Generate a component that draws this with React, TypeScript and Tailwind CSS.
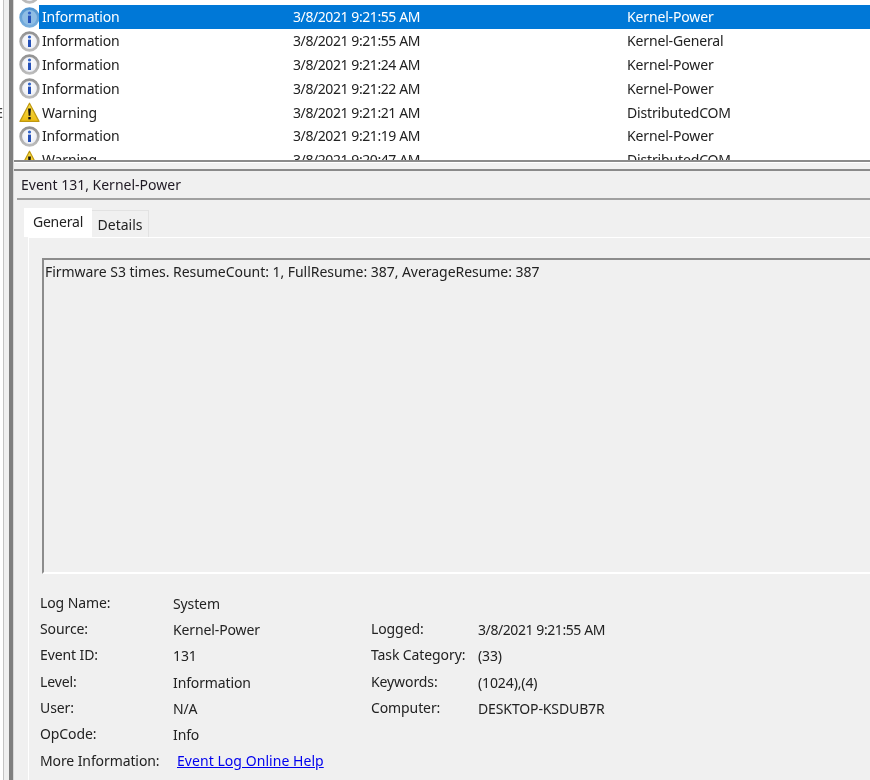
import React from "react";

// Event Viewer: event list on top, event properties below

const FONT = "[font-family:'Noto_Sans','Open_Sans',sans-serif]";

type Level = "Information" | "Warning";

interface EventRow {
  level: Level;
  date: string;
  source: string;
  selected?: boolean;
}

const rows: EventRow[] = [
  { level: "Information", date: "3/8/2021 9:21:56 AM", source: "Kernel-Power" },
  { level: "Information", date: "3/8/2021 9:21:55 AM", source: "Kernel-Power", selected: true },
  { level: "Information", date: "3/8/2021 9:21:55 AM", source: "Kernel-General" },
  { level: "Information", date: "3/8/2021 9:21:24 AM", source: "Kernel-Power" },
  { level: "Information", date: "3/8/2021 9:21:22 AM", source: "Kernel-Power" },
  { level: "Warning", date: "3/8/2021 9:21:21 AM", source: "DistributedCOM" },
  { level: "Information", date: "3/8/2021 9:21:19 AM", source: "Kernel-Power" },
  { level: "Warning", date: "3/8/2021 9:20:47 AM", source: "DistributedCOM" },
];

function InfoIcon({ selected }: { selected?: boolean }) {
  return (
    <svg width="21" height="21" viewBox="0 0 21 21" className="shrink-0">
      <defs>
        <linearGradient id="rim" x1="0" y1="0" x2="0" y2="1">
          <stop offset="0" stopColor="#939393" />
          <stop offset="1" stopColor="#bcbcbc" />
        </linearGradient>
        <radialGradient id="face" cx="0.5" cy="0.45" r="0.6">
          <stop offset="0" stopColor="#ffffff" />
          <stop offset="1" stopColor="#e6e9f2" />
        </radialGradient>
        <linearGradient id="rimSelected" x1="0" y1="0" x2="0" y2="1">
          <stop offset="0" stopColor="#5596cf" />
          <stop offset="1" stopColor="#78aedd" />
        </linearGradient>
      </defs>
      <circle
        cx="10.5"
        cy="10.5"
        r="8.8"
        fill={selected ? "#8fbde4" : "url(#face)"}
        stroke={selected ? "url(#rimSelected)" : "url(#rim)"}
        strokeWidth="2.8"
      />
      <circle cx="10.5" cy="6" r="1.6" fill="#2f63c8" />
      <path d="M9 8.6h3v7.4H9z" fill="#2450b8" />
    </svg>
  );
}

function WarningIcon() {
  return (
    <svg width="21" height="21" viewBox="0 0 21 21" className="shrink-0">
      <defs>
        <linearGradient id="warn" x1="0" y1="0" x2="0" y2="1">
          <stop offset="0" stopColor="#f9e04f" />
          <stop offset="1" stopColor="#ecbc12" />
        </linearGradient>
      </defs>
      <path
        d="M10.5 1.2 20 19.4H1z"
        fill="url(#warn)"
        stroke="#c0980f"
        strokeWidth="1.2"
        strokeLinejoin="round"
      />
      <path d="M9.1 6.4h2.8l-.5 7.4H9.6z" fill="#111111" />
      <rect x="9.3" y="15" width="2.4" height="2.4" fill="#111111" />
    </svg>
  );
}

function Row({ row }: { row: EventRow }) {
  return (
    <div className="flex h-[23.83px] items-center pl-[5px]">
      <div className="w-[20px]">
        {row.level === "Information" ? <InfoIcon selected={row.selected} /> : <WarningIcon />}
      </div>
      <div
        className={`flex h-full flex-1 items-center pl-[3px] tracking-[-0.15px] ${
          row.selected ? "bg-[#0078d7] text-white" : "text-[#222222]"
        }`}
      >
        <span className="w-[251px]">{row.level}</span>
        <span className="w-[334px] tracking-[-0.42px]">{row.date}</span>
        <span>{row.source}</span>
      </div>
    </div>
  );
}

function Detail({ label, value, width, tight }: { label: string; value: string; width: string; tight?: boolean }) {
  return (
    <div className="flex h-[26.17px] items-center">
      <span className={`${width} shrink-0 -translate-y-px tracking-[-0.1px]`}>{label}</span>
      <span className={tight ? "tracking-[-0.42px]" : "tracking-[-0.12px]"}>{value}</span>
    </div>
  );
}

export default function App() {
  return (
    <div className={`${FONT} flex h-[780px] w-[870px] overflow-hidden bg-[#f0f0f0] text-[14px] leading-[20px] text-[#222222] blur-[0.3px]`}>
      {/* Left window edge */}
      <div className="flex w-[14px] shrink-0 bg-[#f5f5f5]">
        <div className="relative w-[3px] bg-white">
          <span className="absolute right-0 top-[103px] text-[14px] text-[#444444]">E</span>
        </div>
        <div className="w-px bg-[#c4c4c4]" />
        <div className="w-[5px] bg-[#f0f0f0]" />
        <div className="w-[4px] bg-[#7f7f7f]" />
        <div className="w-px bg-[#d8d8d8]" />
      </div>

      <div className="flex min-w-0 flex-1 flex-col">
        {/* Event list */}
        <div className="h-[162px] shrink-0 overflow-hidden border-b-2 border-[#8a8a8a] bg-white">
          <div className="-mt-[18.5px]">
            {rows.map((row, i) => (
              <Row key={i} row={row} />
            ))}
          </div>
        </div>

        {/* Splitter */}
        <div className="h-[7px] shrink-0 border-t border-white bg-[#f0f0f0]" />

        {/* Details pane */}
        <div className="flex flex-1 flex-col border-t-2 border-[#8a8a8a]">
          <div className="flex h-[27px] shrink-0 items-center pl-[7px] text-[#201a24]">Event 131, Kernel-Power</div>
          <div className="ml-[3px] h-[2px] shrink-0 bg-[#a0a0a0]" />

          {/* Tabs */}
          <div className="ml-[10px] mt-[8px] flex h-[29px] shrink-0 items-end">
            <div className="flex h-[29px] w-[68px] items-center justify-center bg-white pb-px tracking-[-0.2px]">General</div>
            <div className="flex h-[27px] w-[57px] items-center justify-center border-r border-t border-[#e2e2e2] pt-px">Details</div>
          </div>

          {/* Tab body */}
          <div className="ml-[14px] flex flex-1 flex-col border-l border-t border-[#ffffff] pl-[13px] pt-[20px]">
            <div className="h-[316px] shrink-0 border-b-2 border-l-2 border-t-2 border-b-white border-l-[#8c8c8c] border-t-[#8c8c8c] pl-[1px] pt-[2px] tracking-[-0.04px]">
              Firmware S3 times. ResumeCount: 1, FullResume: 387, AverageResume: 387
            </div>

            <div className="-ml-[2px] mt-[17px] flex">
              <div className="w-[331px] shrink-0">
                <Detail label="Log Name:" value="System" width="w-[133px]" />
                <Detail label="Source:" value="Kernel-Power" width="w-[133px]" />
                <Detail label="Event ID:" value="131" width="w-[133px]" />
                <Detail label="Level:" value="Information" width="w-[133px]" />
                <Detail label="User:" value="N/A" width="w-[133px]" />
                <Detail label="OpCode:" value="Info" width="w-[133px]" />
                <div className="flex h-[26px] items-center">
                  <span className="w-[137px] shrink-0 tracking-[-0.1px]">More Information:</span>
                  <a href="#" className="tracking-[0.05px] text-[#0000ee] underline">Event Log Online Help</a>
                </div>
              </div>
              <div className="mt-[26.17px] flex-1">
                <Detail label="Logged:" value="3/8/2021 9:21:55 AM" width="w-[107px]" tight />
                <Detail label="Task Category:" value="(33)" width="w-[107px]" />
                <Detail label="Keywords:" value="(1024),(4)" width="w-[107px]" />
                <Detail label="Computer:" value="DESKTOP-KSDUB7R" width="w-[107px]" />
              </div>
            </div>
          </div>
        </div>
      </div>
    </div>
  );
}
